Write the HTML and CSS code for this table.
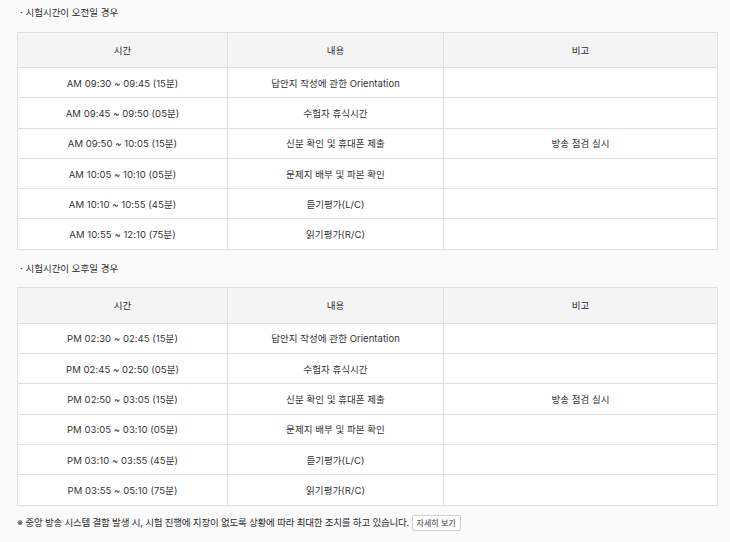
FILE: index.html
```html
<!DOCTYPE html>
<html lang="ko">
<head>
<meta charset="utf-8">
<link rel="stylesheet" href="styles.css">
</head>
<body>
<div class="page">
  <p class="caption">· 시험시간이 오전일 경우</p>
  <table class="sched">
    <colgroup><col class="c1"><col class="c2"><col class="c3"></colgroup>
    <thead><tr><th>시간</th><th>내용</th><th>비고</th></tr></thead>
    <tbody>
      <tr><td>AM 09:30 ~ 09:45 (15분)</td><td>답안지 작성에 관한 Orientation</td><td></td></tr>
      <tr><td>AM 09:45 ~ 09:50 (05분)</td><td>수험자 휴식시간</td><td></td></tr>
      <tr><td>AM 09:50 ~ 10:05 (15분)</td><td>신분 확인 및 휴대폰 제출</td><td>방송 점검 실시</td></tr>
      <tr><td>AM 10:05 ~ 10:10 (05분)</td><td>문제지 배부 및 파본 확인</td><td></td></tr>
      <tr><td>AM 10:10 ~ 10:55 (45분)</td><td>듣기평가(L/C)</td><td></td></tr>
      <tr><td>AM 10:55 ~ 12:10 (75분)</td><td>읽기평가(R/C)</td><td></td></tr>
    </tbody>
  </table>
  <p class="caption second">· 시험시간이 오후일 경우</p>
  <table class="sched">
    <colgroup><col class="c1"><col class="c2"><col class="c3"></colgroup>
    <thead><tr><th class="tall">시간</th><th class="tall">내용</th><th class="tall">비고</th></tr></thead>
    <tbody>
      <tr><td>PM 02:30 ~ 02:45 (15분)</td><td>답안지 작성에 관한 Orientation</td><td></td></tr>
      <tr><td>PM 02:45 ~ 02:50 (05분)</td><td>수험자 휴식시간</td><td></td></tr>
      <tr><td>PM 02:50 ~ 03:05 (15분)</td><td>신분 확인 및 휴대폰 제출</td><td>방송 점검 실시</td></tr>
      <tr><td>PM 03:05 ~ 03:10 (05분)</td><td>문제지 배부 및 파본 확인</td><td></td></tr>
      <tr><td>PM 03:10 ~ 03:55 (45분)</td><td>듣기평가(L/C)</td><td></td></tr>
      <tr><td>PM 03:55 ~ 05:10 (75분)</td><td>읽기평가(R/C)</td><td></td></tr>
    </tbody>
  </table>
  <p class="note"><span class="mark">※</span> 중앙 방송 시스템 결함 발생 시, 시험 진행에 지장이 없도록 상황에 따라 최대한 조치를 하고 있습니다. <button class="more">자세히 보기</button></p>
</div>
</body>
</html>
```

FILE: styles.css
```css
html, body {
  margin: 0;
  padding: 0;
  background: #fafafa;
}
body {
  font-family: Inter, "Noto Sans CJK KR", sans-serif;
  font-size: 9.5px;
  color: #2a2a2a;
}
.page {
  padding: 0 0 0 17px;
  width: 699px;
}
.caption {
  margin: 0;
  height: 32px;
  line-height: 26px;
  padding-left: 3px;
  color: #2a2a2a;
}
.caption.second {
  height: 37px;
  line-height: 37px;
}
.sched {
  border-collapse: collapse;
  width: 700px;
  table-layout: fixed;
  background: #fff;
}
.c1 { width: 210px; }
.c2 { width: 216px; }
.c3 { width: 274px; }
.sched th, .sched td {
  border: 1px solid #e0e0e0;
  text-align: center;
  padding: 0;
  font-weight: 400;
}
.sched th {
  background: #f4f4f4;
  height: 34px;
  color: #2a2a2a;
}
.sched th.tall {
  height: 35px;
}
.sched td {
  height: 29.3px;
  color: #333;
  letter-spacing: 0.05px;
}
.note {
  margin: 0;
  padding-top: 9px;
  line-height: 16px;
  color: #2a2a2a;
  letter-spacing: -0.2px;
}
.mark {
  color: #444;
}
.more {
  font-family: inherit;
  font-size: 8px;
  letter-spacing: 0;
  color: #333;
  background: #fff;
  border: 1px solid #cfcfcf;
  border-radius: 2px;
  padding: 0 4px;
  height: 16px;
  line-height: 14px;
  vertical-align: middle;
  margin-left: 0;
}
```
